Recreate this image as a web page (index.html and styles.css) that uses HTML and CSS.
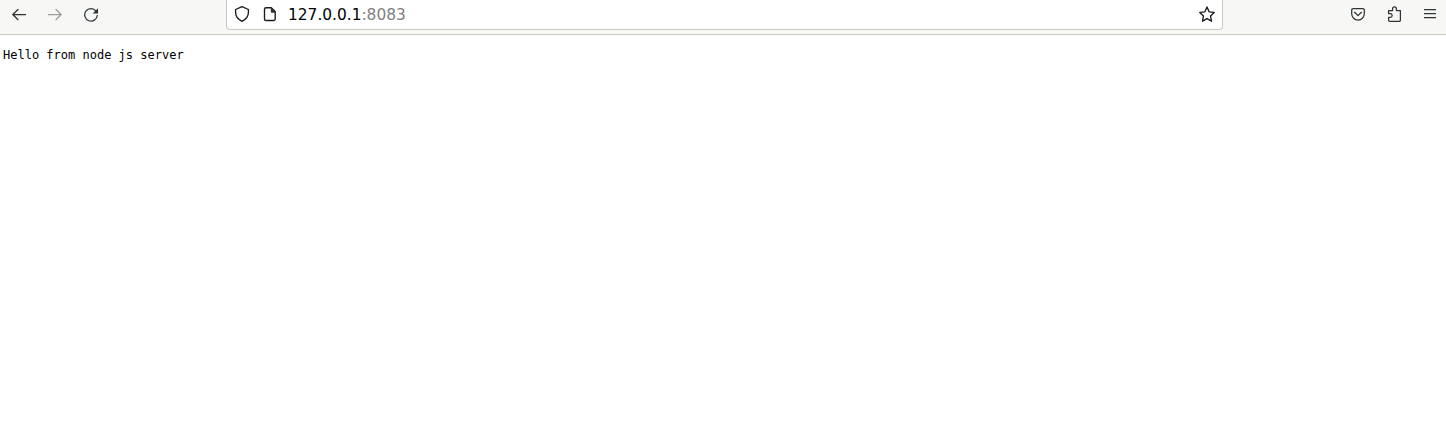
FILE: index.html
```html
<!DOCTYPE html>
<html lang="en">
<head>
<meta charset="utf-8">
<title>127.0.0.1:8083</title>
<link rel="stylesheet" href="styles.css">
</head>
<body>
<header class="toolbar">
  <nav class="nav-buttons">
    <svg class="icon" viewBox="0 0 16 16"><path d="M14.600 8.500H2M7 3.500 1.800 8.500 7 13.700"/></svg>
    <svg class="icon disabled" viewBox="0 0 16 16"><path d="M1.400 8.500H14M9 3.500l5.200 5L9 13.700"/></svg>
    <svg class="icon" viewBox="0 0 16 16"><path d="M13 5A6.300 6.300 0 1 0 14.300 9.300"/><path class="solid" d="M15 2.200v5.300H9.700z"/></svg>
  </nav>
  <div class="url-field">
    <svg class="icon dark" viewBox="0 0 16 16"><path d="M8 .6 14.400 3.500v3c0 3.700-2.500 6.900-6.400 8.900-3.900-2-6.400-5.200-6.400-8.900v-3z"/></svg>
    <svg class="icon dark page-icon" viewBox="0 0 16 16"><path d="M4 1.700h5.200l4 4v7.300a1.500 1.500 0 0 1-1.500 1.500H4a1.500 1.500 0 0 1-1.500-1.500V3.200A1.500 1.500 0 0 1 4 1.700z"/><path class="solid" d="M8.800 1.200h.8l4.200 4.100v1.500H9.800a1 1 0 0 1-1-1z"/></svg>
    <span class="address">127.0.0.1<span class="port">:8083</span></span>
    <svg class="icon dark star" viewBox="0 0 16 16"><path d="M8 .9 10.100 5.800 15.200 6.400 11.500 9.900 12.500 15.200 8 12.600 3.500 15.200 4.500 9.900 .8 6.400 5.900 5.800z"/></svg>
  </div>
  <div class="actions">
    <svg class="icon" viewBox="0 0 16 16"><path d="M3.200 2.600h9.600a1.500 1.500 0 0 1 1.500 1.500v3.700a6.300 6.300 0 0 1-12.600 0V4.100a1.500 1.500 0 0 1 1.500-1.500z"/><path d="M4.600 6.300 8 9.600l3.400-3.300"/></svg>
    <svg class="icon puzzle" viewBox="0 0 16 16"><path d="M2.600 7.700V4.600h4V2.700a1.900 1.900 0 0 1 3.800 0v1.900h4v9.700a1 1 0 0 1-1 1H3.600a1 1 0 0 1-1-1v-2.900h1.700a1.850 1.850 0 0 0 0-3.700z"/></svg>
    <svg class="icon menu" viewBox="0 0 16 16"><path d="M2 3.600h12M2 7.600h12M2 11.600h12"/></svg>
  </div>
</header>
<main><pre class="response">Hello from node js server</pre></main>
</body>
</html>
```
FILE: styles.css
```css
body {
  margin: 0;
  background: #fff;
}
.toolbar {
  display: flex;
  justify-content: space-between;
  box-sizing: border-box;
  height: 35px;
  padding: 0 8px 0 11px;
  background: #f7f7f5;
  border-bottom: 1px solid #cdc7c2;
}
.nav-buttons,
.actions {
  display: flex;
  align-items: center;
  gap: 20px;
  height: 28px;
}
.nav-buttons {
  width: 215px;
}
.actions {
  width: 215px;
  justify-content: flex-end;
}
.url-field {
  flex: 1;
  display: flex;
  align-items: center;
  box-sizing: border-box;
  height: 30px;
  padding: 0 7px 1px;
  background: #fff;
  border: 1px solid #cdc7c2;
  border-top: 0;
  border-radius: 0 0 4px 4px;
}
.icon {
  flex: none;
  width: 16px;
  height: 16px;
  fill: none;
  stroke: #2e3436;
  stroke-width: 1.25;
  stroke-linecap: round;
  stroke-linejoin: round;
}
.icon .solid {
  fill: #2e3436;
  stroke: none;
}
.dark {
  stroke: #1b1b1b;
  stroke-width: 1.35;
}
.disabled {
  opacity: .45;
}
.menu {
  stroke-width: 1.2;
  stroke-linecap: butt;
}
.page-icon {
  margin-left: 12px;
}
.address {
  margin-left: 10px;
  padding-top: 2px;
  font: 15.4px/28px "DejaVu Sans", sans-serif;
  color: #000;
}
.port {
  color: #808080;
}
.star {
  margin-left: auto;
}
.response {
  margin: 13px 3px;
  font: 12px/14px "DejaVu Sans Mono", monospace;
  color: #000;
}
```
